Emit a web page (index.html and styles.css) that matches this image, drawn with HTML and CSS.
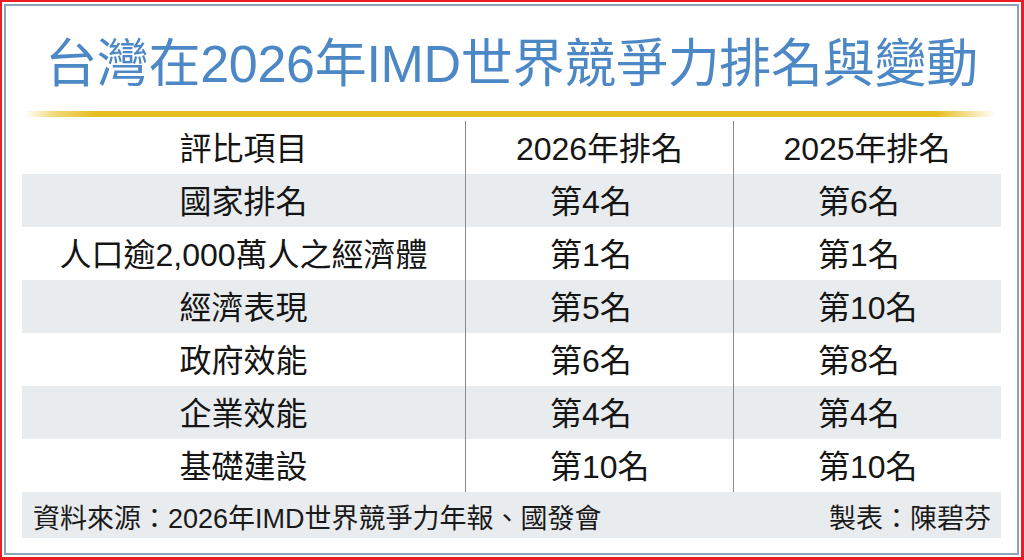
FILE: index.html
```html
<!DOCTYPE html>
<html lang="zh-Hant">
<head>
<meta charset="utf-8">
<title>台灣在2026年IMD世界競爭力排名與變動</title>
<link rel="stylesheet" href="styles.css">
</head>
<body>
<div class="frame">
  <div class="panel">
    <h1 class="title">台灣在2026年IMD世界競爭力排名與變動</h1>
    <div class="rule"></div>
    <div class="table">
      <div class="row head">
        <div class="cell">評比項目</div>
        <div class="cell div">2026年排名</div>
        <div class="cell div">2025年排名</div>
      </div>
      <div class="row alt">
        <div class="cell">國家排名</div>
        <div class="cell div val">第4名</div>
        <div class="cell div val">第6名</div>
      </div>
      <div class="row">
        <div class="cell">人口逾2,000萬人之經濟體</div>
        <div class="cell div val">第1名</div>
        <div class="cell div val">第1名</div>
      </div>
      <div class="row alt">
        <div class="cell">經濟表現</div>
        <div class="cell div val">第5名</div>
        <div class="cell div val">第10名</div>
      </div>
      <div class="row">
        <div class="cell">政府效能</div>
        <div class="cell div val">第6名</div>
        <div class="cell div val">第8名</div>
      </div>
      <div class="row alt">
        <div class="cell">企業效能</div>
        <div class="cell div val">第4名</div>
        <div class="cell div val">第4名</div>
      </div>
      <div class="row">
        <div class="cell">基礎建設</div>
        <div class="cell div val">第10名</div>
        <div class="cell div val">第10名</div>
      </div>
    </div>
    <div class="footer">
      <span>資料來源：2026年IMD世界競爭力年報、國發會</span>
      <span>製表：陳碧芬</span>
    </div>
  </div>
</div>
</body>
</html>
```

FILE: styles.css
```css
* { box-sizing: border-box; }
html, body { margin: 0; padding: 0; background: #fff; }
body {
  font-family: "Liberation Sans", "Noto Sans CJK TC", sans-serif;
  color: #151515;
}
.frame {
  width: 1024px;
  height: 560px;
  border: 2px solid #ec1c24;
  border-right-width: 3px;
  border-bottom-width: 3px;
  padding: 2px;
}
.panel {
  height: 100%;
  border: 2px solid #8ca3ba;
  padding: 32px 16px 0 16px;
  display: flex;
  flex-direction: column;
}
.title {
  margin: 0;
  font-size: 52px;
  line-height: 52px;
  font-weight: 400;
  color: #4c87c6;
  text-align: center;
  letter-spacing: -0.3px;
}
.rule {
  margin: 21px 5px 0 3px;
  height: 6px;
  background: linear-gradient(to right, rgba(232,192,32,0) 0%, rgba(232,192,32,0.6) 3%, #e6c022 7%, #e6c022 94%, rgba(232,192,32,0) 100%);
}
.table {
  margin-top: 4px;
  display: flex;
  flex-direction: column;
}
.row {
  display: grid;
  grid-template-columns: 443px 268px 267px;
  height: 53px;
}
.row.alt { background: #e9ecef; }
.cell {
  text-align: center;
  font-size: 32px;
  line-height: 53px;
  padding-top: 2px;
  white-space: nowrap;
}
.cell.div { border-left: 1px solid #8a8a8a; }
.cell.val { text-align: left; padding-left: 84px; }
.footer {
  height: 46px;
  background: #e9ecef;
  display: flex;
  justify-content: space-between;
  align-items: center;
  padding: 2px 10px 0 11px;
  font-size: 27px;
  color: #1a1a1a;
}
```
